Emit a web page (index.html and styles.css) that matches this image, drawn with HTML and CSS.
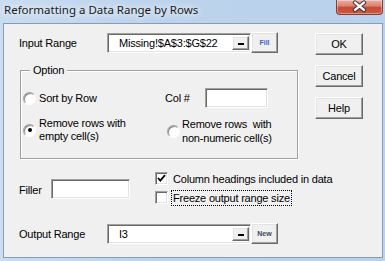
FILE: index.html
```html
<!DOCTYPE html>
<html>
<head>
<meta charset="utf-8">
<link rel="stylesheet" href="styles.css">
</head>
<body>
<div class="window">
  <div class="titlebar">
    <span class="title">Reformatting a Data Range by Rows</span>
    <div class="close">
      <svg width="47" height="15" viewBox="0 0 47 15">
        <path d="M19.5 2.5 L28.5 10 M28.5 2.5 L19.5 10" stroke="#4a3a38" stroke-width="4.6" stroke-linecap="round"/>
        <path d="M19.5 2.5 L28.5 10 M28.5 2.5 L19.5 10" stroke="#ffffff" stroke-width="2.4" stroke-linecap="round"/>
      </svg>
    </div>
  </div>
  <div class="client">
    <div class="main">
      <div class="range-row">
        <span class="label">Input Range</span>
        <div class="rangebox">
          <span class="rangetext">Missing!$A$3:$G$22</span>
          <span class="pick"><span class="bar"></span></span>
        </div>
        <span class="mini-btn fill">Fill</span>
      </div>

      <div class="group">
        <span class="legend">Option</span>
        <div class="opt-grid">
          <div class="opt">
            <span class="radio"></span>
            <span class="opt-text">Sort by Row</span>
          </div>
          <div class="col-field">
            <span class="col-label">Col #</span>
            <span class="textbox col-box"></span>
          </div>
          <div class="opt">
            <span class="radio on"><span class="dot"></span></span>
            <span class="opt-text">Remove rows with<br>empty cell(s)</span>
          </div>
          <div class="opt opt-alt">
            <span class="radio"></span>
            <span class="opt-text">Remove rows&nbsp; with<br>non-numeric cell(s)</span>
          </div>
        </div>
      </div>

      <div class="filler-row">
        <div class="filler">
          <span class="filler-label">Filler</span>
          <span class="textbox filler-box"></span>
        </div>
        <div class="checks">
          <div class="check">
            <span class="checkbox">
              <svg width="11" height="11" viewBox="0 0 11 11"><path d="M2 5 L4.3 7.6 L9 2.2" fill="none" stroke="#000" stroke-width="1.8"/></svg>
            </span>
            <span class="check-text">Column headings included in data</span>
          </div>
          <div class="check">
            <span class="checkbox"></span>
            <span class="check-text focus">Freeze output range size</span>
          </div>
        </div>
      </div>

      <div class="range-row output-row">
        <span class="label">Output Range</span>
        <div class="rangebox">
          <span class="rangetext">I3</span>
          <span class="pick"><span class="bar"></span></span>
        </div>
        <span class="mini-btn new">New</span>
      </div>
    </div>
    <div class="side">
      <span class="btn">OK</span>
      <span class="btn">Cancel</span>
      <span class="btn">Help</span>
    </div>
  </div>
</div>
</body>
</html>
```

FILE: styles.css
```css
* { box-sizing: border-box; }

body {
  margin: 0;
  width: 385px;
  height: 261px;
  overflow: hidden;
  font-family: "Liberation Sans", Arial, sans-serif;
  font-size: 11px;
  letter-spacing: -0.2px;
  color: #000;
}

.window {
  width: 385px;
  height: 261px;
  background: linear-gradient(90deg, #c9dcf1, #bcd3ec 40%, #b9d1ea);
  display: flex;
  flex-direction: column;
  padding: 0 2px 3px 3px;
}

.titlebar {
  height: 23px;
  flex: none;
  display: flex;
  justify-content: space-between;
  align-items: flex-start;
}

.title {
  font-family: "Noto Sans", "Open Sans", sans-serif;
  font-size: 11.5px;
  letter-spacing: 0;
  line-height: 16px;
  margin: 2px 0 0 1px;
  color: #1a1a1a;
  text-shadow: 0 0 6px rgba(255,255,255,0.9), 0 0 10px rgba(255,255,255,0.8);
}

.close {
  width: 47px;
  height: 15px;
  display: flex;
  background: linear-gradient(#eab0a4 0%, #dc8370 40%, #c84a35 55%, #c95a44 100%);
  border: 1px solid #8e3b2f;
  border-top: none;
  border-radius: 0 0 4px 4px;
  box-shadow: inset 0 0 0 1px rgba(255,255,255,0.35);
}

.close svg { display: block; margin-left: -1px; }

.client {
  flex: 1;
  display: flex;
  border: 1px solid #8c9cb0;
  background: #f0f0f0;
}

.main {
  width: 311px;
  flex: none;
  padding: 9px 0 0 15px;
  display: flex;
  flex-direction: column;
}

.range-row {
  display: flex;
  align-items: flex-start;
  height: 20px;
}

.label {
  width: 88px;
  line-height: 20px;
}

.textbox, .rangebox {
  background: #fff;
  border: 1px solid;
  border-color: #a0a0a0 #fff #fff #a0a0a0;
  box-shadow: inset 1px 1px 0 #696969, inset -1px -1px 0 #e3e3e3;
}

.rangebox {
  width: 144px;
  height: 20px;
  display: flex;
  padding: 2px 1px 2px 2px;
}

.rangetext {
  flex: 1;
  padding-left: 9px;
  line-height: 15px;
}

.pick, .mini-btn, .btn {
  background: #f0f0f0;
  border: 1px solid;
  border-color: #fff #696969 #696969 #fff;
  box-shadow: inset -1px -1px 0 #a0a0a0, inset 1px 1px 0 #e3e3e3;
}

.pick {
  width: 17px;
  display: flex;
  justify-content: center;
  align-items: flex-end;
  padding-bottom: 4px;
}

.bar {
  width: 6px;
  height: 2px;
  background: #000;
}

.mini-btn {
  width: 27px;
  height: 21px;
  margin-top: -1px;
  display: flex;
  justify-content: center;
  align-items: center;
  font-size: 7px;
  font-weight: bold;
  letter-spacing: 0;
}

.fill { color: #3565c0; }
.new { color: #3a4660; }

.group {
  position: relative;
  margin: 17px 0 0 1px;
  width: 278px;
  height: 89px;
  border: 1px solid #a0a0a0;
  box-shadow: inset 1px 1px 0 #fff, 1px 1px 0 #fff;
  padding: 17px 0 0 2px;
}

.legend {
  position: absolute;
  top: -8px;
  left: 9px;
  padding: 0 3px;
  background: #f0f0f0;
  line-height: 14px;
}

.opt-grid {
  display: grid;
  grid-template-columns: 142px auto;
  row-gap: 7px;
}

.opt {
  display: flex;
  align-items: center;
  gap: 3px;
  line-height: 13px;
}

.opt-alt {
  margin: 2px 0 0 2px;
  gap: 2px;
  line-height: 14px;
}

.radio {
  width: 13px;
  height: 13px;
  flex: none;
  border-radius: 50%;
  background: #fff;
  border: 1px solid;
  border-color: #a0a0a0 #fff #fff #a0a0a0;
  box-shadow: inset 1px 1px 0 #8a8a8a;
  display: flex;
  justify-content: center;
  align-items: center;
}

.dot {
  width: 4px;
  height: 4px;
  border-radius: 50%;
  background: #000;
}

.col-field {
  display: flex;
  align-items: center;
}

.col-label { width: 40px; }

.col-box {
  width: 63px;
  height: 20px;
}

.filler-row {
  display: flex;
  margin-top: 13px;
}

.filler {
  width: 136px;
  flex: none;
  display: flex;
  align-items: center;
  margin-top: 7px;
  height: 20px;
}

.filler-label {
  width: 32px;
  padding-top: 2px;
}

.filler-box {
  width: 79px;
  height: 20px;
}

.checks {
  display: flex;
  flex-direction: column;
  gap: 6px;
  white-space: nowrap;
}

.check {
  height: 13px;
  display: flex;
  align-items: center;
  gap: 3px;
}

.checkbox {
  width: 13px;
  height: 13px;
  flex: none;
  background: #fff;
  border: 1px solid;
  border-color: #a0a0a0 #fff #fff #a0a0a0;
  box-shadow: inset 1px 1px 0 #696969, inset -1px -1px 0 #e3e3e3;
  display: flex;
}

.checkbox svg { display: block; }

.check-text {
  line-height: 14px;
  padding: 0 1px;
  border: 1px solid transparent;
  white-space: nowrap;
}

.check-text.focus { border: 1px dotted #000; }

.output-row { margin-top: 20px; }

.side {
  display: flex;
  flex-direction: column;
  gap: 10px;
  padding-top: 9px;
}

.btn {
  width: 48px;
  height: 22px;
  display: flex;
  justify-content: center;
  align-items: center;
}
```
